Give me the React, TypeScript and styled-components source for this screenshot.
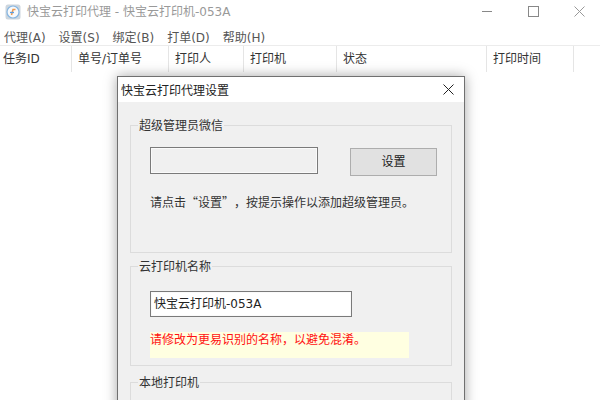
import React from 'react';
import styled, { createGlobalStyle } from 'styled-components';

const GlobalStyle = createGlobalStyle`
  html, body {
    margin: 0;
    padding: 0;
    background: #fff;
  }
  body {
    width: 600px;
    height: 400px;
    overflow: hidden;
    font-family: "DejaVu Sans", "Noto Sans CJK SC", sans-serif;
    font-size: 12px;
    color: #222;
  }
`;

const Window = styled.div`
  position: relative;
  width: 600px;
  height: 400px;
  overflow: hidden;
  background: #fff;
`;

const TitleBar = styled.div`
  display: flex;
  align-items: center;
  height: 23px;
  padding: 0 0 1px 5px;
`;

const TitleText = styled.span`
  margin-left: 6px;
  color: #999;
  line-height: 22px;
  flex: 1;
`;

const WinButtons = styled.div`
  display: flex;
  align-items: center;
  gap: 35px;
  padding-right: 15px;
`;

const MenuBar = styled.div`
  display: flex;
  align-items: center;
  height: 18px;
  padding: 3px 0 0 4px;
  gap: 13px;
  color: #555;
  border-bottom: 1px solid #ececec;
`;

const HeaderRow = styled.div`
  display: flex;
  height: 26px;
`;

const HeaderCell = styled.div<{ $w: number }>`
  width: ${(p) => p.$w}px;
  box-sizing: border-box;
  padding-left: 6px;
  line-height: 26px;
  border-right: 1px solid #e5e5e5;
  color: #333;
  &:first-child {
    padding-left: 3px;
  }
`;

const Dialog = styled.div`
  position: absolute;
  left: 117px;
  top: 76px;
  width: 348px;
  height: 340px;
  box-sizing: border-box;
  background: #f0f0f0;
  border: 1px solid #707070;
  box-shadow: 0 0 12px rgba(0, 0, 0, 0.35);
`;

const DialogTitle = styled.div`
  display: flex;
  align-items: center;
  justify-content: space-between;
  height: 25px;
  padding: 0 10px 0 3px;
  background: #fff;
  color: #222;
`;

const DialogBody = styled.div`
  display: flex;
  flex-direction: column;
  padding: 14px 12px 0;
`;

const Group = styled.fieldset<{ $h: number; $mt?: number }>`
  margin: ${(p) => p.$mt ?? 0}px 0 0;
  padding: 0 0 0 19px;
  height: ${(p) => p.$h}px;
  box-sizing: border-box;
  border: 1px solid #dcdcdc;
  min-width: 0;
`;

const Legend = styled.legend`
  margin-left: -12px;
  padding: 2px 1px 0;
  line-height: 16px;
  color: #333;
`;

const Row = styled.div<{ $mt: number }>`
  display: flex;
  align-items: flex-start;
  gap: 32px;
  margin-top: ${(p) => p.$mt}px;
`;

const TextBox = styled.div<{ $w: number; $h: number; $bg: string }>`
  width: ${(p) => p.$w}px;
  height: ${(p) => p.$h}px;
  box-sizing: border-box;
  background: ${(p) => p.$bg};
  border: 1px solid #7a7a7a;
  box-shadow: inset 0 0 0 1px #fafafa;
  padding-left: 3px;
  line-height: 24px;
  color: #222;
`;

const Button = styled.div`
  width: 87px;
  height: 28px;
  margin-top: 1px;
  box-sizing: border-box;
  background: #e1e1e1;
  border: 1px solid #adadad;
  text-align: center;
  line-height: 26px;
  color: #222;
`;

const Hint = styled.div`
  margin-top: 16px;
  line-height: 20px;
  color: #333;
  font-family: "Noto Sans CJK SC", sans-serif;
  font-variant-east-asian: full-width;
  text-spacing-trim: space-all;
`;

const Warning = styled.div`
  width: 259px;
  height: 26px;
  margin-top: 15px;
  background: #ffffe1;
  color: #f11;
  line-height: 16px;
`;

const columns = [
  { label: '任务ID', w: 72 },
  { label: '单号/订单号', w: 97 },
  { label: '打印人', w: 75 },
  { label: '打印机', w: 93 },
  { label: '状态', w: 150 },
  { label: '打印时间', w: 87 },
];

const menus = ['代理(A)', '设置(S)', '绑定(B)', '打单(D)', '帮助(H)'];

const AppIcon = () => (
  <svg width="16" height="16" viewBox="0 0 16 16">
    <rect x="0.5" y="0.5" width="15" height="15" rx="2.5" fill="#cdd6de" />
    <circle cx="8" cy="8" r="6" fill="#f7f9fb" stroke="#86b6e2" strokeWidth="1.2" />
    <path d="M6.5 11 L8 5.5 L10.5 5.5" fill="none" stroke="#ef9a4f" strokeWidth="1.5" />
    <path d="M5 8.5 L9 8.5" stroke="#5a9de0" strokeWidth="1.3" />
  </svg>
);

const MinimizeIcon = () => (
  <svg width="11" height="11" viewBox="0 0 11 11">
    <path d="M0 5.5 H10" stroke="#888" strokeWidth="1" />
  </svg>
);

const MaximizeIcon = () => (
  <svg width="11" height="11" viewBox="0 0 11 11">
    <rect x="0.5" y="0.5" width="10" height="10" fill="none" stroke="#888" strokeWidth="1" />
  </svg>
);

const CloseIcon = ({ color }: { color: string }) => (
  <svg width="11" height="11" viewBox="0 0 11 11">
    <path d="M0.5 0.5 L10.5 10.5 M10.5 0.5 L0.5 10.5" stroke={color} strokeWidth="1" />
  </svg>
);

const App = () => {
  return (
    <Window>
      <GlobalStyle />
      <TitleBar>
        <AppIcon />
        <TitleText>快宝云打印代理 - 快宝云打印机-053A</TitleText>
        <WinButtons>
          <MinimizeIcon />
          <MaximizeIcon />
          <CloseIcon color="#999" />
        </WinButtons>
      </TitleBar>
      <MenuBar>
        {menus.map((m) => (
          <span key={m}>{m}</span>
        ))}
      </MenuBar>
      <HeaderRow>
        {columns.map((c) => (
          <HeaderCell key={c.label} $w={c.w}>
            {c.label}
          </HeaderCell>
        ))}
      </HeaderRow>
      <Dialog>
        <DialogTitle>
          <span>快宝云打印代理设置</span>
          <CloseIcon color="#222" />
        </DialogTitle>
        <DialogBody>
          <Group $h={137}>
            <Legend>超级管理员微信</Legend>
            <Row $mt={13}>
              <TextBox $w={168} $h={27} $bg="#f0f0f0" />
              <Button>设置</Button>
            </Row>
            <Hint>请点击“设置”，按提示操作以添加超级管理员。</Hint>
          </Group>
          <Group $h={109} $mt={4}>
            <Legend>云打印机名称</Legend>
            <Row $mt={16}>
              <TextBox $w={202} $h={26} $bg="#fff">快宝云打印机-053A</TextBox>
            </Row>
            <Warning>请修改为更易识别的名称，以避免混淆。</Warning>
          </Group>
          <Group $h={60} $mt={7}>
            <Legend>本地打印机</Legend>
          </Group>
        </DialogBody>
      </Dialog>
    </Window>
  );
};

export default App;
